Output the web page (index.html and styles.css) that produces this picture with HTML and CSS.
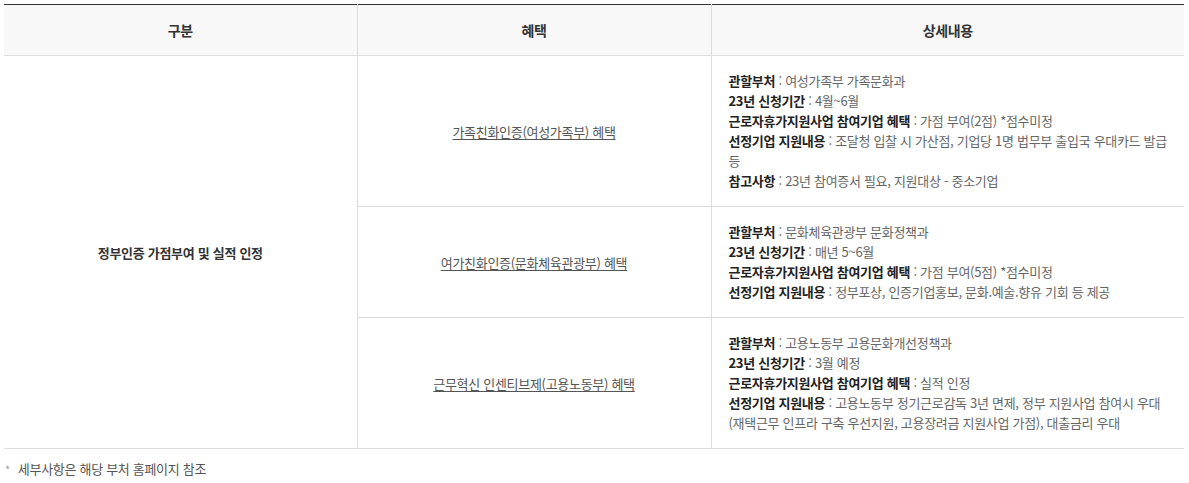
FILE: index.html
```html
<!DOCTYPE html>
<html lang="ko">
<head>
<meta charset="utf-8">
<link rel="stylesheet" href="styles.css">
</head>
<body>
<div class="wrap">
  <table class="tbl">
    <colgroup>
      <col class="c1">
      <col class="c2">
      <col class="c3">
    </colgroup>
    <thead>
      <tr>
        <th>구분</th>
        <th>혜택</th>
        <th>상세내용</th>
      </tr>
    </thead>
    <tbody>
      <tr class="r1">
        <td rowspan="3" class="cat">정부인증 가점부여 및 실적 인정</td>
        <td class="ben"><a href="#">가족친화인증(여성가족부) 혜택</a></td>
        <td class="det">
          <p><b>관할부처</b> : 여성가족부 가족문화과</p>
          <p><b>23년 신청기간</b> : 4월~6월</p>
          <p><b>근로자휴가지원사업 참여기업 혜택</b> : 가점 부여(2점) *점수미정</p>
          <p><b>선정기업 지원내용</b> : 조달청 입찰 시 가산점, 기업당 1명 법무부 출입국 우대카드 발급 등</p>
          <p><b>참고사항</b> : 23년 참여증서 필요, 지원대상 - 중소기업</p>
        </td>
      </tr>
      <tr>
        <td class="ben"><a href="#">여가친화인증(문화체육관광부) 혜택</a></td>
        <td class="det">
          <p><b>관할부처</b> : 문화체육관광부 문화정책과</p>
          <p><b>23년 신청기간</b> : 매년 5~6월</p>
          <p><b>근로자휴가지원사업 참여기업 혜택</b> : 가점 부여(5점) *점수미정</p>
          <p><b>선정기업 지원내용</b> : 정부포상, 인증기업홍보, 문화.예술.향유 기회 등 제공</p>
        </td>
      </tr>
      <tr>
        <td class="ben"><a href="#">근무혁신 인센티브제(고용노동부) 혜택</a></td>
        <td class="det">
          <p><b>관할부처</b> : 고용노동부 고용문화개선정책과</p>
          <p><b>23년 신청기간</b> : 3월 예정</p>
          <p><b>근로자휴가지원사업 참여기업 혜택</b> : 실적 인정</p>
          <p><b>선정기업 지원내용</b> : 고용노동부 정기근로감독 3년 면제, 정부 지원사업 참여시 우대 (재택근무 인프라 구축 우선지원, 고용장려금 지원사업 가점), 대출금리 우대</p>
        </td>
      </tr>
    </tbody>
  </table>
  <p class="note"><span class="star">*</span>세부사항은 해당 부처 홈페이지 참조</p>
</div>
</body>
</html>
```
FILE: styles.css
```css
* { box-sizing: border-box; }
html, body { margin: 0; padding: 0; background: #fff; }
body {
  font-family: "Noto Sans CJK KR", "Noto Sans", sans-serif;
  font-size: 13px;
  letter-spacing: -0.3px;
  color: #666;
  word-break: keep-all;
}
.wrap { padding: 4px 5px 0 4px; }
.tbl {
  width: 1180px;
  border-collapse: collapse;
  table-layout: fixed;
  border-top: 1px solid #333;
}
.c1 { width: 353px; }
.c2 { width: 354px; }
.c3 { width: 473px; }
.tbl th {
  height: 51px;
  background: #f8f8f8;
  font-size: 14px;
  letter-spacing: -0.4px;
  font-weight: 700;
  color: #333;
  text-align: center;
  vertical-align: middle;
  border-bottom: 1px solid #ddd;
  border-left: 1px solid #ddd;
  padding: 0;
}
.tbl th:first-child { border-left: 0; }
.tbl td {
  border-bottom: 1px solid #ddd;
  border-left: 1px solid #ddd;
  vertical-align: middle;
  padding: 0;
}
.tbl td.cat {
  border-left: 0;
  text-align: center;
  font-weight: 700;
  color: #333;
}
.tbl td.ben { text-align: center; }
.ben a {
  color: #555;
  text-decoration: underline;
  text-underline-offset: 2px;
}
.tbl td.det { padding: 15px 10px 15px 17px; }
.det p {
  margin: 0;
  line-height: 20px;
  color: #666;
}
.det b { color: #222; font-weight: 700; }
.note {
  margin: 11px 0 0 1px;
  line-height: 18px;
  color: #555;
  display: flex;
  gap: 8px;
}
.star { color: #999; font-size: 11px; }
```
